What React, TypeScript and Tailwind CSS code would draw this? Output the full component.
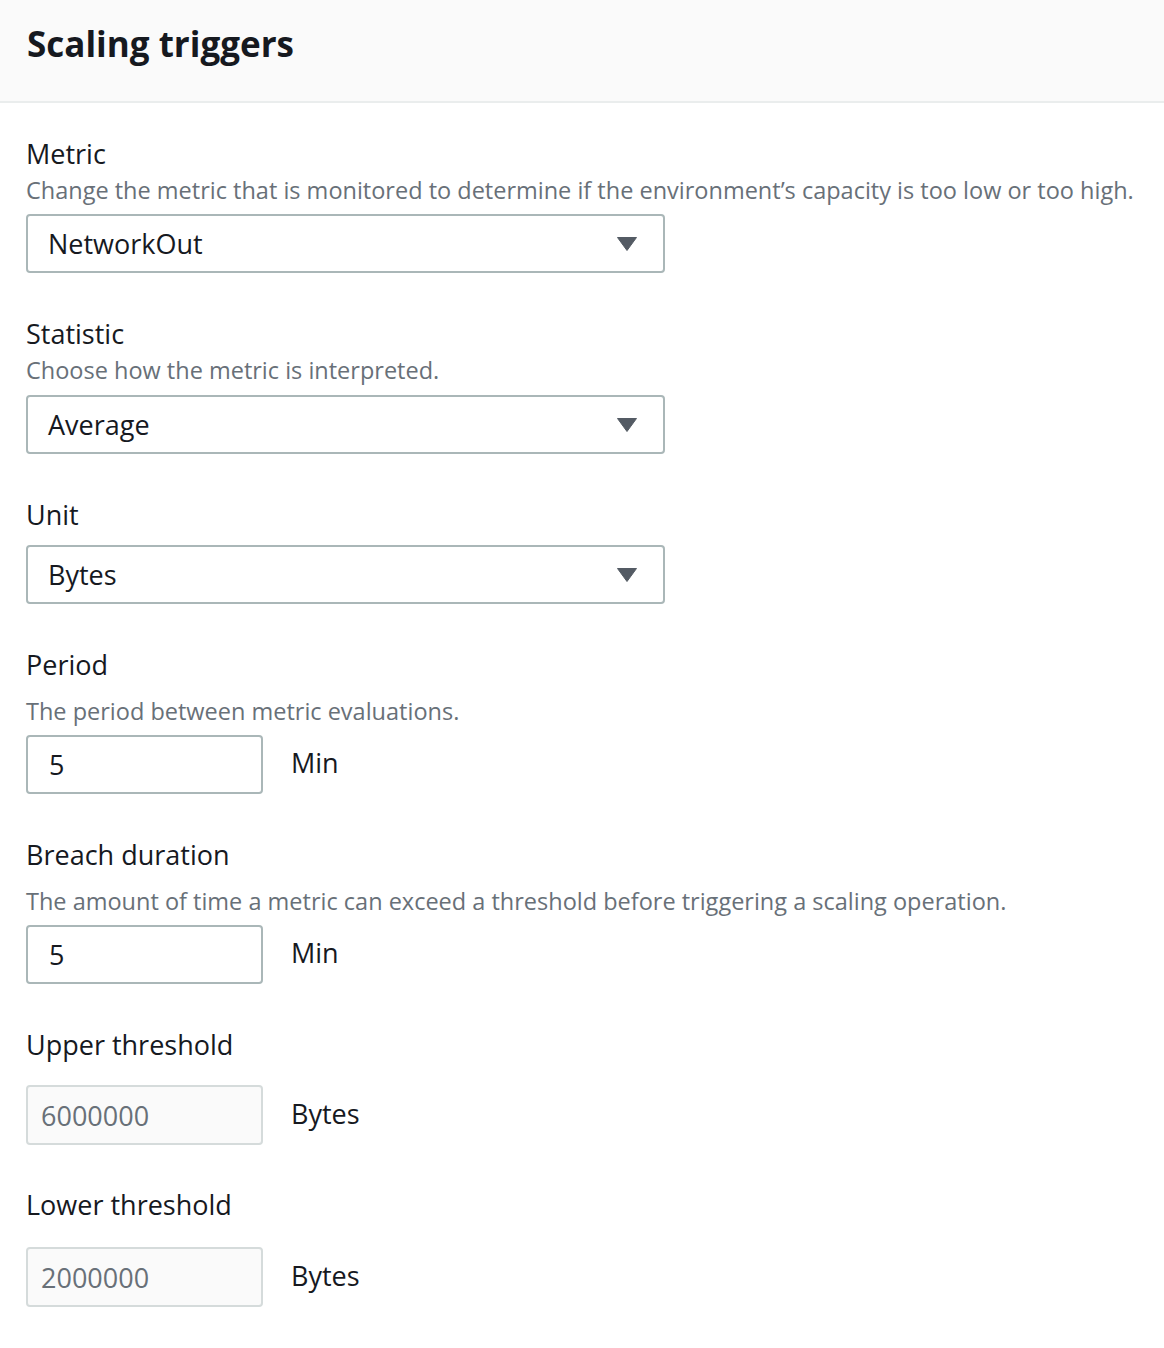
import React from "react";

const font = { fontFamily: '"Open Sans", "Noto Sans", sans-serif' };

function Arrow() {
  return (
    <svg width="20" height="14" viewBox="0 0 20 14" className="shrink-0">
      <path d="M0.5 0.5 L19.5 0.5 L10 13.5 Z" fill="#545b64" stroke="#545b64" strokeLinejoin="round" strokeWidth="1" />
    </svg>
  );
}

function Select({ value }: { value: string }) {
  return (
    <div className="w-[639px] h-[59px] border-2 border-[#aab7b8] rounded-[4px] bg-white flex items-center justify-between pl-[20px] pr-[26px]">
      <span className="text-[27px] text-[#16191f] leading-none">{value}</span>
      <Arrow />
    </div>
  );
}

function NumInput({ value, unit, disabled }: { value: string; unit: string; disabled?: boolean }) {
  return (
    <div className="flex items-center gap-[28px]">
      {disabled ? (
        <div className="w-[237px] h-[60px] border-2 border-[#d5dbdb] rounded-[4px] bg-[#fafafa] flex items-center pl-[13px]">
          <span className="text-[27px] text-[#687078] leading-none">{value}</span>
        </div>
      ) : (
        <div className="w-[237px] h-[59px] border-2 border-[#aab7b8] rounded-[4px] bg-white flex items-center pl-[21px]">
          <span className="text-[27px] text-[#16191f] leading-none">{value}</span>
        </div>
      )}
      <span className="text-[27px] text-[#16191f] leading-none -mt-[4px]">{unit}</span>
    </div>
  );
}

function Label({ children }: { children: React.ReactNode }) {
  return <div className="text-[27px] leading-[36px] text-[#16191f]">{children}</div>;
}

function Desc({ children }: { children: React.ReactNode }) {
  return <div className="text-[23.5px] leading-[36px] text-[#687078]">{children}</div>;
}

export default function App() {
  return (
    <div className="w-[1164px] min-h-[1348px] bg-white" style={font}>
      <div className="h-[103px] bg-[#fafafa] border-b-2 border-[#eaeded] px-[27px] pt-[21px]">
        <h1 className="text-[35px] font-bold leading-[46px] text-[#16191f]">Scaling triggers</h1>
      </div>
      <div className="px-[26px] pt-[33px]">
        <Label>Metric</Label>
        <Desc>Change the metric that is monitored to determine if the environment’s capacity is too low or too high.</Desc>
        <div className="mt-[6px]"><Select value="NetworkOut" /></div>

        <div className="mt-[43px]"><Label>Statistic</Label></div>
        <Desc>Choose how the metric is interpreted.</Desc>
        <div className="mt-[7px]"><Select value="Average" /></div>

        <div className="mt-[43px]"><Label>Unit</Label></div>
        <div className="mt-[12px]"><Select value="Bytes" /></div>

        <div className="mt-[43px]"><Label>Period</Label></div>
        <div className="mt-[10px]"><Desc>The period between metric evaluations.</Desc></div>
        <div className="mt-[6px]"><NumInput value="5" unit="Min" /></div>

        <div className="mt-[43px]"><Label>Breach duration</Label></div>
        <div className="mt-[10px]"><Desc>The amount of time a metric can exceed a threshold before triggering a scaling operation.</Desc></div>
        <div className="mt-[6px]"><NumInput value="5" unit="Min" /></div>

        <div className="mt-[43px]"><Label>Upper threshold</Label></div>
        <div className="mt-[22px]"><NumInput value="6000000" unit="Bytes" disabled /></div>

        <div className="mt-[42px]"><Label>Lower threshold</Label></div>
        <div className="mt-[24px]"><NumInput value="2000000" unit="Bytes" disabled /></div>
      </div>
    </div>
  );
}
